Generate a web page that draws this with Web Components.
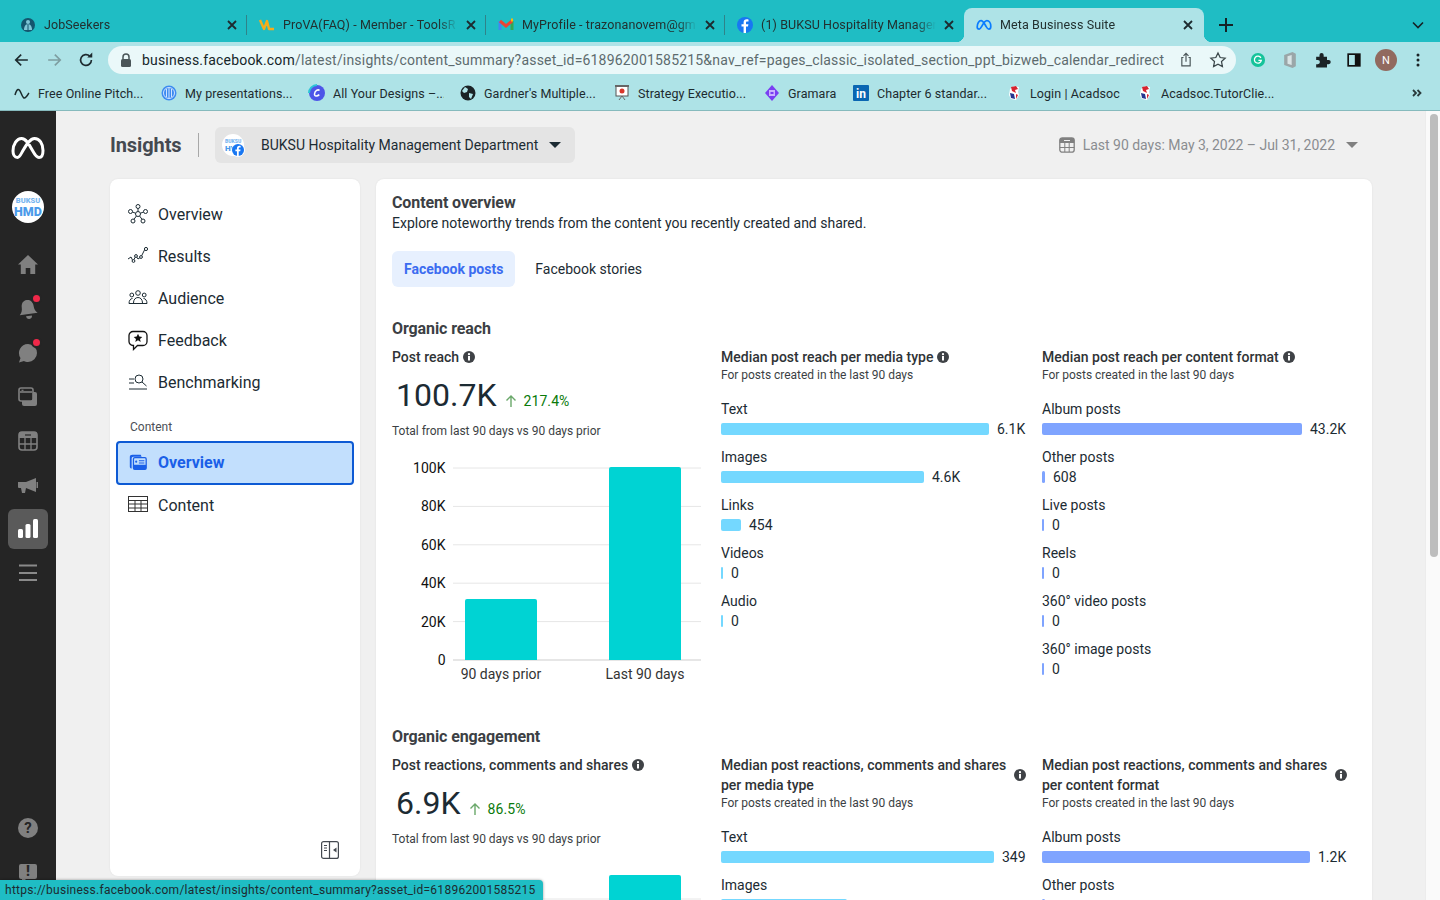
<!DOCTYPE html>
<html><head><meta charset="utf-8"><title>Meta Business Suite</title>
<style>
html,body{margin:0;height:100%;overflow:hidden;background:#f0f0f0;font-family:Roboto,"Liberation Sans",sans-serif;color:#1c2b33}
</style></head><body>
<browser-shell>
  <tab-strip slot="tabs">
    <chrome-tab icon="job">JobSeekers</chrome-tab>
    <chrome-tab icon="va">ProVA(FAQ) - Member - ToolsR</chrome-tab>
    <chrome-tab icon="gmail">MyProfile - trazonanovem@gm</chrome-tab>
    <chrome-tab icon="fb" last>(1) BUKSU Hospitality Manager</chrome-tab>
    <chrome-tab icon="meta" active>Meta Business Suite</chrome-tab>
  </tab-strip>
  <url-bar slot="toolbar"></url-bar>
  <bookmark-bar slot="bookmarks">
    <book-mark icon="wave" w="107">Free Online Pitch...</book-mark>
    <book-mark icon="rings" w="108">My presentations...</book-mark>
    <book-mark icon="canva" w="111">All Your Designs –...</book-mark>
    <book-mark icon="globe" w="114">Gardner's Multiple...</book-mark>
    <book-mark icon="slide" w="110">Strategy Executio...</book-mark>
    <book-mark icon="gramara" w="49">Gramara</book-mark>
    <book-mark icon="li" w="113">Chapter 6 standar...</book-mark>
    <book-mark icon="lion" w="91">Login | Acadsoc</book-mark>
    <book-mark icon="lion" w="114">Acadsoc.TutorClie...</book-mark>
  </bookmark-bar>
  <app-rail slot="rail"></app-rail>
  <page-header slot="header"></page-header>
  <side-nav slot="side">
    <nav-item icon="hub">Overview</nav-item>
    <nav-item icon="results">Results</nav-item>
    <nav-item icon="people">Audience</nav-item>
    <nav-item icon="feedback">Feedback</nav-item>
    <nav-item icon="bench">Benchmarking</nav-item>
    <nav-label>Content</nav-label>
    <nav-item icon="cards" selected>Overview</nav-item>
    <nav-item icon="table" compact>Content</nav-item>
  </side-nav>
  <content-card slot="main">
    <insight-section heading="Organic reach">
      <metric-block title-text="Post reach" value="100.7K" delta="217.4%" top1="144" top2="12" lines="13"></metric-block>
      <bar-list heading="Median post reach per media type" color="#74d8ff">
        <bar-row label="Text" w="268" value="6.1K"></bar-row>
        <bar-row label="Images" w="203" value="4.6K"></bar-row>
        <bar-row label="Links" w="20" value="454"></bar-row>
        <bar-row label="Videos" w="2" value="0"></bar-row>
        <bar-row label="Audio" w="2" value="0"></bar-row>
      </bar-list>
      <bar-list heading="Median post reach per content format" color="#7fa4ff">
        <bar-row label="Album posts" w="260" value="43.2K"></bar-row>
        <bar-row label="Other posts" w="3" value="608"></bar-row>
        <bar-row label="Live posts" w="2" value="0"></bar-row>
        <bar-row label="Reels" w="2" value="0"></bar-row>
        <bar-row label="360° video posts" w="2" value="0"></bar-row>
        <bar-row label="360° image posts" w="2" value="0"></bar-row>
      </bar-list>
    </insight-section>
    <insight-section heading="Organic engagement">
      <metric-block title-text="Post reactions, comments and shares" value="6.9K" delta="86.5%" top1="140" top2="12" lines="36"></metric-block>
      <bar-list heading="Median post reactions, comments and shares per media type" color="#74d8ff">
        <bar-row label="Text" w="273" value="349"></bar-row>
        <bar-row label="Images" w="126"></bar-row>
      </bar-list>
      <bar-list heading="Median post reactions, comments and shares per content format" color="#7fa4ff">
        <bar-row label="Album posts" w="268" value="1.2K"></bar-row>
        <bar-row label="Other posts" w="3"></bar-row>
      </bar-list>
    </insight-section>
  </content-card>
  <status-bubble slot="status">https://business.facebook.com/latest/insights/content_summary?asset_id=618962001585215</status-bubble>
</browser-shell>

<script>
const ICONS={
 job:`<circle cx="8" cy="8" r="7" fill="#14566e"/><circle cx="8" cy="5" r="2" fill="#7fc6d6"/><path d="M4 13c0-4 2-6 4-6s4 2 4 6" fill="#7fc6d6"/><path d="M8 7v7" stroke="#14566e"/>`,
 va:`<path d="M1 3l4 9 3-8 2 8h5" fill="none" stroke="#f5ad1b" stroke-width="2.4" stroke-linejoin="round"/>`,
 gmail:`<path d="M2 4v9" stroke="#4285f4" stroke-width="3"/><path d="M14 4v9" stroke="#34a853" stroke-width="3"/><path d="M2 4l6 5 6-5" fill="none" stroke="#ea4335" stroke-width="3"/><path d="M13 3l2 0" stroke="#fbbc04" stroke-width="3"/>`,
 fb:`<circle cx="8" cy="8" r="8" fill="#1877f2"/><path d="M9 16V9.6h2l.4-2.4H9V5.8c0-.8.3-1.2 1.2-1.2h1.3V2.5C11 2.4 10.4 2.3 9.8 2.3 7.8 2.3 6.6 3.5 6.6 5.5v1.7H4.5v2.4h2.1V16z" fill="#fff"/>`,
 meta:`<path d="M1.2 10C1.2 6.5 3 3.6 5 3.6c2.2 0 3.4 3 5.2 6 1 1.7 1.7 2.6 2.6 2.6 1.2 0 2-1.2 2-3 0-3.400-1.700-5.600-3.900-5.600-2.100 0-3.700 3-5.200 5.800C4.700 11.200 4.200 12.200 3.300 12.200 2 12.200 1.200 11.400 1.200 10z" fill="none" stroke="#0a7cff" stroke-width="1.700"/>`,
 wave:`<path d="M1 10c2-7 4-7 6-2s3 6 5 4 2-3 3-4" fill="none" stroke="#1b2a2c" stroke-width="1.500"/>`,
 rings:`<circle cx="8" cy="8" r="7.500" fill="#3d8bf0"/><circle cx="8" cy="8" r="5.500" fill="none" stroke="#cfe4ff"/><path d="M5.500 4v8M8 3v10M10.500 4v8" stroke="#cfe4ff"/>`,
 canva:`<circle cx="8" cy="8" r="8" fill="#4d55e8"/><path d="M0 8a8 8 0 0 1 8-8" fill="none" stroke="#2bc4d8" stroke-width="2"/><path d="M10.500 5.500C9 3.800 5.800 6 5.500 9c-.2 2.500 2.800 2.500 4.800.6" fill="none" stroke="#fff" stroke-width="1.500"/>`,
 globe:`<circle cx="8" cy="8" r="7.500" fill="#1b2326"/><path d="M5 2l3 2-1 3-3 1-2-2zM9 8l4 1-2 5-2-2z" fill="#aee3e7"/>`,
 slide:`<rect x="2" y="1" width="12" height="10" fill="#fff" stroke="#555"/><rect x="1" y="0" width="14" height="2" fill="#666"/><circle cx="8" cy="6" r="2.500" fill="#d9362b"/><path d="M8 11l-3 4M8 11l3 4" stroke="#666"/>`,
 gramara:`<path d="M8 0l7 8-7 8-7-8z" fill="#7a3ff2"/><rect x="5" y="5" width="6" height="6" fill="#c9b2ff"/><rect x="6.500" y="7" width="3" height="2" fill="#7a3ff2"/>`,
 li:`<rect width="16" height="16" rx="1" fill="#0a66b2"/><text x="8" y="13" font-family="Roboto" font-weight="700" font-size="12" text-anchor="middle" fill="#fff">in</text>`,
 lion:`<path d="M8 1l5 1-1 5 1 3-3 5-5-1-2-4 1-6z" fill="#fff"/><path d="M5 2l5-1 2 3-3 1 1 3-4-2z" fill="#d6232f"/><path d="M4 8l4 1 1 5-4-1z" fill="#24358f"/><path d="M10 9l2 1-2 4z" fill="#d6232f"/>`,
 back:`<path d="M19 12H5.500M11 5.500L4.500 12l6.500 6.500" fill="none" stroke="currentColor" stroke-width="2"/>`,
 fwd:`<path d="M5 12h13.500M13 5.500l6.500 6.500-6.500 6.500" fill="none" stroke="currentColor" stroke-width="2"/>`,
 reload:`<path d="M18.500 12a6.500 6.500 0 1 1-2-4.700" fill="none" stroke="currentColor" stroke-width="2"/><path d="M13.500 9h6V3z" fill="currentColor"/>`,
 lock:`<rect x="3" y="7" width="10" height="8" rx="1.500" fill="#4a5558"/><path d="M5 7V5a3 3 0 0 1 6 0v2" fill="none" stroke="#4a5558" stroke-width="1.500"/>`,
 share:`<g transform="translate(0 2)"><path d="M8 5H6v10h10V5h-2" transform="translate(1 2)" fill="none" stroke="#4a5558" stroke-width="1.400"/><path d="M12 2v10M9 5l3-3 3 3" fill="none" stroke="#4a5558" stroke-width="1.400"/></g>`,
 star:`<path d="M12 3.500l2.600 5.500 6 .8-4.400 4.100 1.100 6L12 17l-5.300 2.900 1.100-6L3.400 9.800l6-.8z" fill="none" stroke="#3a4649" stroke-width="1.500"/>`,
 gram:`<circle cx="12" cy="12" r="8.500" fill="#15c39a"/><path d="M15.500 9.500a4.200 4.200 0 1 0 .5 3H12.500" fill="none" stroke="#fff" stroke-width="1.500"/>`,
 office:`<path d="M5 6l10-3.500 4 2v15l-4 2-10-3.500z" fill="#9aa6a8"/><path d="M9 7.500l5-1.500v12l-5-1.500z" fill="#d9e4e5"/>`,
 puzzle:`<path d="M5 8h4V6a2.500 2.500 0 0 1 5 0v2h4v4h2a2.500 2.500 0 0 1 0 5h-2v4H5v-4h2a2.500 2.500 0 0 0 0-5H5z" fill="#1b2326"/>`,
 panel:`<rect x="5" y="5" width="14" height="14" fill="none" stroke="#111" stroke-width="2"/><rect x="13" y="5" width="6" height="14" fill="#111"/>`,
 dots:`<circle cx="12" cy="6" r="1.800" fill="#1b2326"/><circle cx="12" cy="12" r="1.800" fill="#1b2326"/><circle cx="12" cy="18" r="1.800" fill="#1b2326"/>`,
 close:`<path d="M3 3l8 8M11 3l-8 8" stroke="#1d2b2f" stroke-width="1.800"/>`,
 plus:`<path d="M10 3v14M3 10h14" stroke="#152326" stroke-width="2"/>`,
 chev:`<path d="M5 7.500l5 5 5-5" fill="none" stroke="#152326" stroke-width="1.600"/>`,
 more:`<path d="M4 5l3 3-3 3M8.500 5l3 3-3 3" fill="none" stroke="#2a3a3c" stroke-width="1.800"/>`,
 home:`<path d="M10 0L0 9.500h2.800V19h4.900v-6h4.600v6h4.900V9.500H20z" fill="#808080"/>`,
 bell:`<g transform="rotate(-8 10 10)"><path d="M10 1c-4 0-6 3-6 7 0 3-1 5-3 7h18c-2-2-3-4-3-7 0-4-2-7-6-7z" fill="#808080"/><path d="M7 17h6a3 3 0 0 1-6 0z" fill="#808080"/></g>`,
 bubble:`<path d="M10 1a9 9 0 0 1 0 18c-1.500 0-3-.3-4-1l-5 1.500 1.500-4.500A9 9 0 0 1 10 1z" fill="#808080"/>`,
 stack:`<rect x="4" y="5" width="15" height="14" rx="2" fill="#808080"/><rect x="1" y="1" width="14" height="13" rx="2" fill="#252525" stroke="#808080" stroke-width="1.600"/><path d="M2 5h12" stroke="#808080" stroke-width="1.600"/><path d="M3.500 3.300h2" stroke="#808080" stroke-width="1.200"/>`,
 cal:`<rect x="1" y="1" width="18" height="18" rx="3" fill="none" stroke="#808080" stroke-width="1.600"/><path d="M1 3a2 2 0 0 1 2-2h14a2 2 0 0 1 2 2v4H1z" fill="#808080"/><path d="M1 13h18M7 7v12M13 7v12" stroke="#808080" stroke-width="1.300"/><path d="M7 4h6" stroke="#252525" stroke-width="1.200"/>`,
 mega:`<g transform="translate(0 3)"><path d="M0 4h8l10-4v14L8 10l-1 5H4L3 10H1a1 1 0 0 1-1-1z" fill="#808080"/><rect x="18.500" y="4" width="1.500" height="6" fill="#808080"/></g>`,
 bars:`<rect x="0" y="10" width="5" height="9" rx="1.500" fill="#fff"/><rect x="7.500" y="5" width="5" height="14" rx="1.500" fill="#fff"/><rect x="15" y="0" width="5" height="19" rx="1.500" fill="#fff"/>`,
 burger:`<path d="M1 2.500h18M1 10h18M1 17h18" stroke="#8a8a8a" stroke-width="2"/>`,
 hub:`<g fill="none" stroke="#1c2b33" stroke-width="1"><circle cx="10" cy="10" r="2.500"/><circle cx="10" cy="2.500" r="2"/><circle cx="2.500" cy="7.500" r="2"/><circle cx="17.500" cy="7.500" r="2"/><circle cx="5" cy="17" r="2"/><circle cx="15" cy="17" r="2"/><path d="M10 4.500v3M4.500 8l3 1.200M15.500 8l-3 1.200M6 15.300l2.400-3.300M14 15.300l-2.400-3.300"/></g>`,
 results:`<g fill="none" stroke="#1c2b33" stroke-width="1"><path d="M0 13l3-2 2 4 3-5 2 3 3-2 4-8"/><circle cx="5.500" cy="15" r="1.400" fill="#fff"/><circle cx="8" cy="10" r="1.400" fill="#fff"/><circle cx="13" cy="11" r="1.400" fill="#fff"/><circle cx="18" cy="3" r="1.600" fill="#fff"/></g>`,
 people:`<g fill="none" stroke="#1c2b33" stroke-width="1"><circle cx="10" cy="5" r="2.300"/><circle cx="3.800" cy="7" r="1.900"/><circle cx="16.200" cy="7" r="1.900"/><path d="M5.500 15c0-3.500 2-5.500 4.500-5.500s4.500 2 4.500 5.500M1 15.500h18c0-3-1.500-5-3.500-5M1 15.500c0-3 1.500-5 3.500-5"/></g>`,
 feedback:`<path d="M5 1.500h10a4 4 0 0 1 4 4v6a4 4 0 0 1-4 4H9.500L5.500 19.500v-4H5a4 4 0 0 1-4-4v-6a4 4 0 0 1 4-4z" fill="none" stroke="#111" stroke-width="1.300"/><path d="M10 3.800l1.300 2.800 3 .3-2.300 2 .7 3-2.700-1.600-2.700 1.600.7-3-2.300-2 3-.3z" fill="#111"/>`,
 bench:`<g fill="none" stroke="#1c2b33" stroke-width="1"><path d="M1 7h5M1 11h5M1 17h18"/><circle cx="11" cy="7" r="4"/><path d="M14 10l4.500 4"/></g>`,
 cards:`<path d="M2 4c0-1 1-2 3-2h9l1 2H6c-1.500 0-2 1-2 2v11C3 17 2 16 2 15z" fill="#1a5fe8"/><rect x="6" y="5" width="14" height="13" rx="1.500" fill="#c2dffd" stroke="#1a5fe8" stroke-width="1.400"/><rect x="6" y="13" width="14" height="5" rx="1" fill="#1a5fe8"/><circle cx="9" cy="9.500" r="1.200" fill="#1a5fe8"/><path d="M12 8.500h6M12 11h6" stroke="#1a5fe8" stroke-width="1.300"/>`,
 table:`<g fill="none" stroke="#333" stroke-width="1"><rect x=".5" y="1.500" width="19" height="15"/><path d="M.5 5.500h19M.5 9h19M.5 13h19M7 5.500v11M13 5.500v11"/></g>`,
 collapse:`<g fill="none" stroke="#444950" stroke-width="1.200"><rect x=".6" y=".6" width="16.800" height="16.800" rx="2"/><path d="M8.500 .6v16.800M3 4.500h3M3 7h3M3 9.500h3" /></g><path d="M12 9l3.500-2.500v5z" fill="#444950"/>`,
 calgray:`<rect x=".8" y=".8" width="14.400" height="14.400" rx="2.500" fill="none" stroke="#808080" stroke-width="1.300"/><path d="M.8 3a2 2 0 0 1 2-2h10.400a2 2 0 0 1 2 2v3H.8z" fill="#808080"/><path d="M.8 10.500h14.400M5.800 6v9M10.200 6v9" stroke="#808080"/><path d="M5 3.500h6" stroke="#f0f0f0"/>`,
 info:`<circle cx="6" cy="6" r="6" fill="#3f4246"/><rect x="5" y="5" width="2" height="4.500" fill="#fff"/><circle cx="6" cy="3.200" r="1.150" fill="#fff"/>`,
 up:`<path d="M6 13V2M1.500 6.500L6 2l4.500 4.500" fill="none" stroke="#6aa86a" stroke-width="1.400"/>`
};
const VB={job:16,va:16,gmail:16,fb:16,meta:16,wave:16,rings:16,canva:16,globe:16,slide:16,gramara:16,li:16,lion:16,lock:16,
 back:24,fwd:24,reload:24,share:24,star:24,gram:24,office:24,puzzle:24,panel:24,dots:24,close:14,plus:20,chev:20,more:16,
 home:20,bell:20,bubble:20,stack:20,cal:20,mega:20,bars:20,burger:20,hub:20,results:20,people:20,feedback:20,bench:20,cards:22,table:20,collapse:18,calgray:16,info:12,up:12};

class Base extends HTMLElement{
  constructor(){super();this.attachShadow({mode:'open'})}
  render(html){this.shadowRoot.innerHTML=html}
}
class XIcon extends Base{
  connectedCallback(){const n=this.getAttribute('name'),s=this.getAttribute('size')||VB[n];
    this.render(`<style>:host{display:inline-flex;flex:none;width:${s}px;height:${s}px}svg{display:block;width:100%;height:100%;overflow:visible}</style><svg viewBox="0 0 ${VB[n]} ${VB[n]}">${ICONS[n]}</svg>`)}
}
class BrowserShell extends Base{
  connectedCallback(){this.render(`<style>
   :host{display:flex;flex-direction:column;height:900px;width:1440px;position:relative;overflow:hidden}
   .top{flex:none;background:#aee3e7;border-bottom:1px solid #86babd}
   .body{flex:1;display:flex;min-height:0}
   .page{flex:1;min-width:0;display:flex;flex-direction:column;padding:0 53px 0 54px;background:#f0f0f0;overflow:hidden}
   .cols{display:flex;gap:16px;align-items:flex-start}
   .scroll{flex:none;width:15px;background:#fafafa;box-sizing:border-box;padding:3px 3px 0 4px;border-left:1px solid #ececec}
   .thumb{height:443px;background:#bdbdbd;border-radius:4px;width:8px}
   ::slotted([slot=status]){position:absolute;left:0;bottom:0}
  </style>
  <div class="top"><slot name="tabs"></slot><slot name="toolbar"></slot><slot name="bookmarks"></slot></div>
  <div class="body"><slot name="rail"></slot>
   <div class="page"><slot name="header"></slot><div class="cols"><slot name="side"></slot><slot name="main"></slot></div></div>
   <div class="scroll"><div class="thumb"></div></div>
  </div><slot name="status"></slot>`)}
}
class TabStrip extends Base{
  connectedCallback(){this.render(`<style>
   :host{display:flex;height:42px;background:#1fbdc4;box-sizing:border-box;padding:8px 12px 0 8px;align-items:stretch}
   .plus{align-self:center;margin:0 0 0 12px;display:flex}.chev{align-self:center;margin:0 0 0 auto;display:flex}
  </style><slot></slot><span class="plus"><x-icon name="plus" size="20"></x-icon></span><span class="chev"><x-icon name="chev" size="20"></x-icon></span>`)}
}
class ChromeTab extends Base{
  connectedCallback(){const a=this.hasAttribute('active'),l=this.hasAttribute('last');
   this.render(`<style>
   :host{display:flex;align-items:center;width:${a?240:239}px;box-sizing:border-box;height:34px;padding:0 0 1px 12px;position:relative;flex:none;
     ${a?'background:#aee3e7;border-radius:8px 8px 0 0;':''}font:12.500px Roboto,sans-serif;color:#22302f}
   ${!a&&!l?':host::after{content:"";position:absolute;right:0;top:7px;height:20px;width:1px;background:#2f8389}':''}
   ${a?':host::before{content:"";position:absolute;left:-8px;bottom:0;width:8px;height:8px;background:radial-gradient(circle at 0 0,transparent 8px,#aee3e7 8.500px)}:host::after{content:"";position:absolute;right:-8px;bottom:0;width:8px;height:8px;background:radial-gradient(circle at 100% 0,transparent 8px,#aee3e7 8.500px)}':''}
   .t{width:175px;margin-left:8px;white-space:nowrap;overflow:hidden;-webkit-mask-image:linear-gradient(90deg,#000 155px,transparent 175px);mask-image:linear-gradient(90deg,#000 155px,transparent 175px);letter-spacing:.1px}
   .x{margin-left:6px;display:flex}
   </style><x-icon name="${this.getAttribute('icon')}" size="16"></x-icon><span class="t"><slot></slot></span><span class="x"><x-icon name="close" size="14"></x-icon></span>`)}
}
class UrlBar extends Base{
  connectedCallback(){this.render(`<style>
   :host{display:flex;align-items:center;height:34px;padding:4px 0 2px 12px;box-sizing:border-box;gap:12px;color:#1d2b2f}
   .b{width:20px;height:20px;display:flex}
   .pill{flex:none;width:1128px;height:28px;box-sizing:border-box;border-radius:14px;background:#eaf8f9;display:flex;align-items:center;padding:0 8px 0 10px;gap:8px}
   .u{flex:1;min-width:0;white-space:nowrap;overflow:hidden;font:14px Roboto,sans-serif;color:#5d6b6e;letter-spacing:.19px}.u b{font-weight:400;color:#16262a}
   .av{width:22px;height:22px;margin:0 -1px;border-radius:50%;background:#916a5f;color:#fff;font:11px Roboto,sans-serif;display:flex;align-items:center;justify-content:center;flex:none}
   .gap{display:flex;gap:12px}
   </style>
   <span class="b"><x-icon name="back" size="20"></x-icon></span><span class="b" style="color:#7e9ea1"><x-icon name="fwd" size="20"></x-icon></span><span class="b"><x-icon name="reload" size="20"></x-icon></span>
   <div class="pill"><x-icon name="lock" size="16"></x-icon><span class="u"><b>business.facebook.com</b>/latest/insights/content_summary?asset_id=618962001585215&amp;nav_ref=pages_classic_isolated_section_ppt_bizweb_calendar_redirect</span>
    <span class="gap"><x-icon name="share" size="20"></x-icon><x-icon name="star" size="20"></x-icon></span></div>
   <x-icon name="gram" size="20"></x-icon><x-icon name="office" size="20"></x-icon><x-icon name="puzzle" size="20"></x-icon><x-icon name="panel" size="20"></x-icon><span class="av">N</span><x-icon name="dots" size="20"></x-icon>`)}
}
class BookmarkBar extends Base{
  connectedCallback(){this.render(`<style>
   :host{display:flex;height:34px;align-items:center;padding-left:14px;box-sizing:border-box;gap:16px;position:relative}
   .m{margin-left:auto;margin-right:15px;display:flex}
   </style><slot></slot><span class="m"><x-icon name="more" size="16"></x-icon></span>`)}
}
class BookMark extends Base{
  connectedCallback(){this.render(`<style>
   :host{display:flex;align-items:center;gap:8px;font:12.500px Roboto,sans-serif;color:#1d2b2f;flex:none}
   span{display:block;width:${this.getAttribute('w')}px;white-space:nowrap;overflow:hidden;letter-spacing:.08px}
   </style><x-icon name="${this.getAttribute('icon')}" size="16"></x-icon><span><slot></slot></span>`)}
}
class AppRail extends Base{
  connectedCallback(){
   const it=(n,s=20,d='')=>`<div class="i">${d?`<span class="dot" style="${d}"></span>`:''}<x-icon name="${n}" size="${s}"></x-icon></div>`;
   this.render(`<style>
   :host{display:flex;flex-direction:column;align-items:center;width:56px;flex:none;background:#252525;box-sizing:border-box;padding:25px 0 7px;height:789px}
   .av{width:32px;height:32px;border-radius:50%;background:#fff;margin:31px 0 20px;display:flex;flex-direction:column;align-items:center;justify-content:center;color:#4b9bea;font-family:Roboto,sans-serif;font-weight:900;flex:none}
   .av small{display:block;font-size:7.500px;line-height:8px;color:#7ab6ef}.av b{display:block;font-size:12.500px;line-height:13px;font-weight:900}
   .i{height:44px;width:56px;display:flex;align-items:center;justify-content:center;position:relative;flex:none}
   .i:last-child{height:43px}
   .dot{position:absolute;width:7px;height:7px;background:#f02849;border-radius:50%;border:2px solid #252525;z-index:1}
   .act{width:40px;height:40px;border-radius:6px;background:#5a5a5a;display:flex;align-items:center;justify-content:center}
   .sp{margin-top:auto}
   .h{width:20px;height:20px;border-radius:50%;background:#808080;color:#252525;font:700 15px/20px Roboto,sans-serif;text-align:center}
   .f{width:18px;height:15px;background:#808080;border-radius:2px;color:#252525;font:900 14px/15px Roboto,sans-serif;text-align:center;position:relative}
   .f::after{content:"";position:absolute;left:3px;bottom:-4px;border:2px solid transparent;border-top-color:#808080;border-left-color:#808080}
   </style>
   <svg width="34" height="24" viewBox="0 0 34 24" style="flex:none"><path d="M2 15C2 8 6 2.500 10.500 2.500C15 2.500 18 8 21.500 14.500C24.500 20 26 21.500 28 21.500C30.500 21.500 32 19 32 14.500C32 7.500 28.500 2.500 23.500 2.500C19 2.500 15.500 8.500 12 14.500C9.500 19 8.500 21.500 6.500 21.500C3.500 21.500 2 18.500 2 15Z" fill="none" stroke="#fff" stroke-width="3"/></svg>
   <div class="av"><small>BUKSU</small><b>HMD</b></div>
   ${it('home')}${it('bell',20,'left:31px;top:6px')}${it('bubble',20,'left:31px;top:6px')}${it('stack')}${it('cal')}${it('mega')}
   <div class="i"><div class="act"><x-icon name="bars" size="20"></x-icon></div></div>
   ${it('burger')}
   <div class="i sp"><div class="h">?</div></div>
   <div class="i"><div class="f">!</div></div>`)}
}
class PageHeader extends Base{
  connectedCallback(){this.render(`<style>
   :host{display:flex;align-items:center;height:68px;flex:none;padding-right:14px}
   h1{margin:0;font:700 20px/24px Roboto,sans-serif;color:#444950;letter-spacing:-.1px;width:72px;white-space:nowrap}
   .d{width:1px;height:24px;background:#a8a8a8;margin:0 16px}
   .sel{display:flex;align-items:center;width:360px;height:36px;box-sizing:border-box;background:#e4e4e4;border-radius:6px;padding-left:7px;font:14px Roboto,sans-serif;color:#1c2b33}
   .ava{width:22px;height:22px;border-radius:50%;background:#fff;position:relative;margin-right:17px;flex:none;display:flex;flex-direction:column;align-items:flex-start;padding-left:3px;box-sizing:border-box;justify-content:center;color:#4b9bea;font-weight:900}
   .ava small{display:block;font-size:5px;line-height:6px;color:#7ab6ef}.ava b{display:block;font-size:8px;line-height:9px}
   .ava x-icon{position:absolute;right:-1px;bottom:-1px;border:1px solid #fff;border-radius:50%}
   .car{width:0;height:0;border:6px solid transparent;border-top:6px solid #1c2b33;border-bottom:0;margin-left:11px}
   .date{margin-left:auto;display:flex;align-items:center;font:14px Roboto,sans-serif;color:#8a8d91;white-space:nowrap}
   .date span{margin:0 11px 0 8px;letter-spacing:-.02px}
   .c2{width:0;height:0;border:6px solid transparent;border-top:6px solid #808080;border-bottom:0}
   </style>
   <h1>Insights</h1><span class="d"></span>
   <div class="sel"><div class="ava"><small>BUKSU</small><b>HM</b><x-icon name="fb" size="12"></x-icon></div>BUKSU Hospitality Management Department<i class="car"></i></div>
   <div class="date"><x-icon name="calgray" size="16"></x-icon><span>Last 90 days: May 3, 2022 – Jul 31, 2022</span><i class="c2"></i></div>`)}
}
class SideNav extends Base{
  connectedCallback(){this.render(`<style>
   :host{display:flex;flex-direction:column;flex:none;width:250px;height:697px;box-sizing:border-box;background:#fff;border-radius:8px;padding:14px 0 17px;box-shadow:0 0 2px rgba(0,0,0,.08)}
   .c{margin-top:auto;align-self:flex-end;margin-right:21px;display:flex}
   </style><slot></slot><div class="c"><x-icon name="collapse" size="18"></x-icon></div>`)}
}
class NavItem extends Base{
  connectedCallback(){const s=this.hasAttribute('selected'),c=this.hasAttribute('compact');
   this.render(`<style>
   :host{display:flex;align-items:center;gap:10px;height:${s?44:c?40:42}px;box-sizing:border-box;font:${s?700:400} 16px Roboto,sans-serif;color:${s?'#1a5fe8':'#1c2b33'};
   ${s?'margin:6px 6px 0;padding:0 0 1px 10px;background:#c2dffd;border:2px solid #0d5ad4;border-radius:4px;':'padding-left:18px;'}}
   </style><x-icon name="${this.getAttribute('icon')}" size="20"></x-icon><span><slot></slot></span>`)}
}
class NavLabel extends Base{
  connectedCallback(){this.render(`<style>:host{display:block;margin:16px 0 0 20px;font:12px/16px Roboto,sans-serif;color:#4b4f56}</style><slot></slot>`)}
}
class ContentCard extends Base{
  connectedCallback(){this.render(`<style>
   :host{display:block;flex:1;min-width:0;background:#fff;border-radius:8px 8px 0 0;box-sizing:border-box;padding:14px 0 0 16px;box-shadow:0 0 2px rgba(0,0,0,.08);height:900px}
   h2{margin:0;font:700 16px/20px Roboto,sans-serif;color:#3c3f44;letter-spacing:-.1px}
   p{margin:0 0 18px;font:14px/20px Roboto,sans-serif;color:#1c2b33;letter-spacing:-.01px}
   .tabs{display:flex;gap:8px;margin-bottom:32px}
   .t{height:36px;padding:0 12px;display:flex;align-items:center;border-radius:6px;font:14px Roboto,sans-serif;color:#1c2b33}
   .on{background:#e7f0fe;color:#3b6cf0;font-weight:700}
   </style><h2>Content overview</h2><p>Explore noteworthy trends from the content you recently created and shared.</p>
   <div class="tabs"><div class="t on">Facebook posts</div><div class="t">Facebook stories</div></div><slot></slot>`)}
}
class InsightSection extends Base{
  connectedCallback(){this.render(`<style>
   :host{display:block;margin-bottom:48px}
   h3{margin:0 0 8px;font:700 16px/20px Roboto,sans-serif;color:#3c3f44;letter-spacing:-.1px}
   .g{display:grid;grid-template-columns:313px 305px 305px;column-gap:16px}
   </style><h3>${this.getAttribute('heading')}</h3><div class="g"><slot></slot></div>`)}
}
class MetricBlock extends Base{
  connectedCallback(){
   const top1=+this.getAttribute('top1'),top2=+this.getAttribute('top2'),l0=+this.getAttribute('lines');
   const labels=['100K','80K','60K','40K','20K','0'];
   const first=l0==13,step=38.4;
   const lines=labels.map((t,i)=>{const y=l0+i*step;return `<line x1="61" x2="309" y1="${y}" y2="${y}" stroke="#e6e6e6" stroke-width="${i==5?2:1}"/>`+(first?`<text x="53.500" y="${y+5}" text-anchor="end" font-size="14" fill="#111">${t}</text>`:'')}).join('');
   const bar=(x,top)=>`<path d="M${x} 205V${top+2}a2 2 0 0 1 2-2h68a2 2 0 0 1 2 2V205z" fill="#00d3d3"/>`;
   const xl=first?`<text x="109" y="224" text-anchor="middle" font-size="14" fill="#333">90 days prior</text><text x="253" y="224" text-anchor="middle" font-size="14" fill="#333">Last 90 days</text>`:'';
   this.render(`<style>
   :host{display:block;font-family:Roboto,sans-serif;width:309px}
   .h{display:flex;align-items:center;gap:4px;font:500 14px/20px Roboto,sans-serif;color:#2f3336}
   .m{display:flex;align-items:center;height:40px;margin:8px 0;padding-left:4px;color:#1c2b33}
   .v{font-size:32px;line-height:40px;margin-right:9px}
   .d{font-size:14px;color:#0a7a0a;margin:12px 0 0 6px;letter-spacing:.1px}
   .m x-icon{margin-top:9px}
   .s{font-size:12px;line-height:16px;color:#3c3f44;letter-spacing:-.02px}
   svg{display:block;margin-top:16px;overflow:visible;font-family:Roboto,sans-serif}
   </style>
   <div class="h">${this.getAttribute('title-text')}<x-icon name="info" size="12"></x-icon></div>
   <div class="m"><span class="v">${this.getAttribute('value')}</span><x-icon name="up" size="12"></x-icon><span class="d">${this.getAttribute('delta')}</span></div>
   <div class="s">Total from last 90 days vs 90 days prior</div>
   <svg width="309" height="224" viewBox="0 0 309 224">${lines}${bar(73,top1)}${bar(217,top2)}${xl}</svg>`)}
}
class BarList extends Base{
  connectedCallback(){this.style.setProperty('--bar',this.getAttribute('color'));this.render(`<style>
   :host{display:block;font-family:Roboto,sans-serif}
   .h{display:flex;align-items:center;gap:4px;font:500 14px/20px Roboto,sans-serif;color:#2f3336}
   .h span{flex:0 1 auto}
   .s{font-size:12px;line-height:16px;color:#3c3f44;margin-bottom:16px;letter-spacing:-.02px}
   .r{display:flex;flex-direction:column;gap:8px}
   </style><div class="h"><span>${this.getAttribute('heading')}</span><x-icon name="info" size="12"></x-icon></div>
   <div class="s">For posts created in the last 90 days</div><div class="r"><slot></slot></div>`)}
}
class BarRow extends Base{
  connectedCallback(){const v=this.getAttribute('value');this.render(`<style>
   :host{display:block;font:14px/20px Roboto,sans-serif;color:#1c2b33}
   .l{display:flex;align-items:center;gap:8px;height:20px}
   i{display:block;height:12px;border-radius:2px;background:var(--bar);width:${this.getAttribute('w')}px}
   </style><div>${this.getAttribute('label')}</div><div class="l"><i></i>${v?`<span>${v}</span>`:''}</div>`)}
}
class StatusBubble extends Base{
  connectedCallback(){this.render(`<style>
   :host{display:block;width:543px;height:20px;box-sizing:border-box;background:#1fbdc4;border-radius:0 4px 0 0;padding-left:5px;font:12px/20px Roboto,sans-serif;color:#1d2b30;letter-spacing:.27px;white-space:nowrap;box-shadow:0 0 3px rgba(0,0,0,.4);z-index:5}
   </style><slot></slot>`)}
}
const defs={'x-icon':XIcon,'browser-shell':BrowserShell,'tab-strip':TabStrip,'chrome-tab':ChromeTab,'url-bar':UrlBar,'bookmark-bar':BookmarkBar,'book-mark':BookMark,'app-rail':AppRail,'page-header':PageHeader,'side-nav':SideNav,'nav-item':NavItem,'nav-label':NavLabel,'content-card':ContentCard,'insight-section':InsightSection,'metric-block':MetricBlock,'bar-list':BarList,'bar-row':BarRow,'status-bubble':StatusBubble};
for(const k in defs)customElements.define(k,defs[k]);
</script>
</body></html>
